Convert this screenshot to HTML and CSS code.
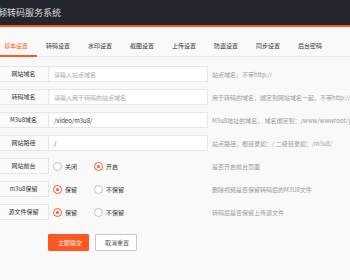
FILE: index.html
```html
<!DOCTYPE html>
<html lang="zh-CN">
<head>
<meta charset="utf-8">
<title>视频转码服务系统</title>
<link rel="stylesheet" href="styles.css">
</head>
<body>
<header class="top">
  <span class="brand">视频转码服务系统</span>
</header>
<main class="content">
  <ul class="tabs">
    <li class="tab active">基本设置</li>
    <li class="tab">转码设置</li>
    <li class="tab">水印设置</li>
    <li class="tab">截图设置</li>
    <li class="tab">上传设置</li>
    <li class="tab">防盗设置</li>
    <li class="tab">同步设置</li>
    <li class="tab">后台密码</li>
  </ul>
  <form class="form">
    <div class="row">
      <label class="lbl">网站域名</label>
      <div class="field"><input class="inp" type="text" placeholder="请输入站点域名"></div>
      <div class="tip">站点域名，不带http://</div>
    </div>
    <div class="row">
      <label class="lbl">转码域名</label>
      <div class="field"><input class="inp" type="text" placeholder="请输入用于转码的站点域名"></div>
      <div class="tip">用于转码的域名，绑定到网站域名一起，不带http://</div>
    </div>
    <div class="row">
      <label class="lbl">M3u8域名</label>
      <div class="field"><input class="inp" type="text" value="/video/m3u8/"></div>
      <div class="tip">M3u8地址的域名， 域名绑定到：/www/wwwroot/yun</div>
    </div>
    <div class="row">
      <label class="lbl">网站路径</label>
      <div class="field"><input class="inp" type="text" value="/"></div>
      <div class="tip">站点路径，根目录如：/ 二级目录如：/m3u8/</div>
    </div>
    <div class="row">
      <label class="lbl">网站前台</label>
      <div class="field radios">
        <span class="radio"><i class="dot"></i>关闭</span>
        <span class="radio on"><i class="dot"></i>开启</span>
      </div>
      <div class="tip">是否开启前台页面</div>
    </div>
    <div class="row">
      <label class="lbl">m3u8保留</label>
      <div class="field radios">
        <span class="radio on"><i class="dot"></i>保留</span>
        <span class="radio"><i class="dot"></i>不保留</span>
      </div>
      <div class="tip">删除视频是否保留转码后的M3U8文件</div>
    </div>
    <div class="row">
      <label class="lbl">源文件保留</label>
      <div class="field radios">
        <span class="radio on"><i class="dot"></i>保留</span>
        <span class="radio"><i class="dot"></i>不保留</span>
      </div>
      <div class="tip">转码后是否保留上传源文件</div>
    </div>
    <div class="actions">
      <button class="btn primary" type="button">立即提交</button>
      <button class="btn plain" type="button">取消重置</button>
    </div>
  </form>
</main>
</body>
</html>
```
FILE: styles.css
```css
* { box-sizing: border-box; }
html, body {
  margin: 0;
  padding: 0;
  width: 350px;
  height: 280px;
  overflow: hidden;
  background: #f9f9f9;
  font-family: "Noto Sans CJK SC", "Noto Sans", sans-serif;
  color: #333;
}
.top {
  height: 27px;
  background: #23262e;
  border-bottom: 2px solid #ff5722;
  display: flex;
  align-items: center;
  overflow: hidden;
}
.brand {
  margin-left: -11px;
  font-size: 9px;
  line-height: 25px;
  color: #dcdcdc;
  white-space: nowrap;
}
.content {
  margin-left: -5px;
  padding-top: 9px;
}
.tabs {
  list-style: none;
  margin: 0;
  padding: 0;
  display: flex;
  height: 21px;
  border-bottom: 1px solid #e6e6e6;
  width: 360px;
}
.tab {
  width: 42px;
  padding: 0 9px;
  height: 20px;
  line-height: 20px;
  font-size: 6px;
  color: #333;
  white-space: nowrap;
  text-align: center;
}
.tab.active {
  color: #ff5722;
  height: 21px;
  border-bottom: 2px solid #ff5722;
}
.form {
  padding-top: 9px;
  padding-left: 3px;
}
.row {
  display: flex;
  align-items: center;
  height: 16px;
  margin-bottom: 7px;
}
.lbl {
  width: 51px;
  height: 16px;
  line-height: 14px;
  background: #fbfbfb;
  border: 1px solid #e6e6e6;
  font-size: 6px;
  color: #333;
  text-align: center;
  white-space: nowrap;
  flex: none;
}
.field {
  width: 160px;
  height: 16px;
  flex: none;
  margin-left: -1px;
}
.inp {
  display: block;
  width: 100%;
  height: 16px;
  margin: 0;
  padding: 0 5px;
  border: 1px solid #e6e6e6;
  background: #fff;
  font-family: "Noto Sans CJK SC", "Noto Sans", sans-serif;
  font-size: 6px;
  color: #333;
  outline: none;
}
.inp::placeholder { color: #a8a8a8; }
.tip {
  margin-left: 4px;
  font-size: 6px;
  color: #999;
  white-space: nowrap;
}
.radios {
  display: flex;
  align-items: center;
  padding-left: 5px;
}
.radio {
  display: flex;
  align-items: center;
  width: 41px;
  font-size: 6px;
  color: #333;
  white-space: nowrap;
}
.dot {
  width: 9px;
  height: 9px;
  border: 1px solid #c2c2c2;
  border-radius: 50%;
  margin-right: 3px;
  background: #fff;
  display: flex;
  align-items: center;
  justify-content: center;
}
.radio.on .dot { border-color: #ff5722; }
.radio.on .dot::after {
  content: "";
  width: 3px;
  height: 3px;
  border-radius: 50%;
  background: #ff5722;
}
.actions {
  display: flex;
  gap: 6px;
  margin-top: 14px;
  padding-left: 50px;
}
.btn {
  height: 17px;
  padding: 0 9px;
  font-family: "Noto Sans CJK SC", "Noto Sans", sans-serif;
  font-size: 6px;
  line-height: 15px;
  border-radius: 1px;
  white-space: nowrap;
  margin: 0;
}
.btn.primary {
  background: #ff5722;
  border: 1px solid #ff5722;
  color: #fff;
  width: 41px;
}
.btn.plain {
  background: #fff;
  border: 1px solid #c9c9c9;
  color: #555;
  width: 42px;
}
```
